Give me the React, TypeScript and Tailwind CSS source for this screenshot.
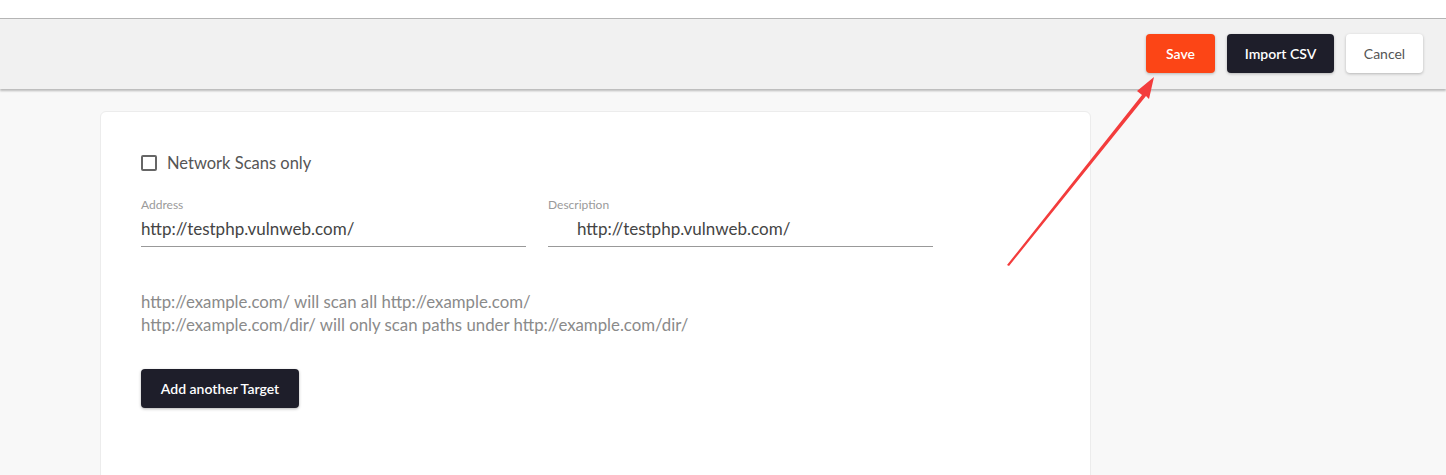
import React from "react";

export default function App() {
  return (
    <div
      className="relative w-[1446px] h-[475px] overflow-hidden bg-[#f8f8f8]"
      style={{ fontFamily: "Lato, 'Open Sans', sans-serif" }}
    >
      <div className="h-[18px] bg-white" />
      <div className="h-[71px] bg-[#f1f1f1] border-t border-[#b5b5b5] shadow-[0_2px_2px_rgba(0,0,0,0.25)] flex items-center justify-end gap-3 pr-[23px] pb-[2px] relative z-10">
        <button className="h-[39px] w-[69px] rounded bg-[#fc4516] text-white text-[14px] font-semibold shadow-[0_1px_3px_rgba(0,0,0,0.25)]">
          Save
        </button>
        <button className="h-[39px] w-[107px] rounded bg-[#1e1e2a] text-white text-[14px] font-semibold shadow-[0_1px_3px_rgba(0,0,0,0.25)]">
          Import CSV
        </button>
        <button className="h-[39px] w-[77px] rounded bg-white text-[#555] text-[14px] shadow-[0_1px_3px_rgba(0,0,0,0.25)]">
          Cancel
        </button>
      </div>
      <div className="pl-[100px] pt-[22px]">
        <div className="w-[991px] h-[400px] bg-white rounded-t-md border border-[#ececec] pl-[40px] pt-[39px]">
          <label className="flex items-center gap-[10px] text-[16.5px] text-[#555]">
            <span className="w-[16px] h-[16px] border-2 border-[#666] rounded-[2px] bg-white" />
            Network Scans only
          </label>
          <div className="flex gap-[22px] mt-[22px]">
            <div className="w-[385px] border-b border-[#999]">
              <div className="text-[12px] text-[#9a9a9a] leading-[14px]">Address</div>
              <div className="text-[17px] text-[#444] leading-[22px] mt-[6px] pb-[6px]">
                http://testphp.vulnweb.com/
              </div>
            </div>
            <div className="w-[385px] border-b border-[#999]">
              <div className="text-[12px] text-[#9a9a9a] leading-[14px]">Description</div>
              <div className="text-[17px] text-[#444] leading-[22px] mt-[6px] pb-[6px] pl-[29px]">
                http://testphp.vulnweb.com/
              </div>
            </div>
          </div>
          <div className="mt-[43px] text-[16.8px] text-[#8a8a8a] leading-[23px]">
            <div>http://example.com/ will scan all http://example.com/</div>
            <div>http://example.com/dir/ will only scan paths under http://example.com/dir/</div>
          </div>
          <button className="mt-[33px] h-[39px] w-[158px] rounded bg-[#1e1e2a] text-white text-[14px] font-semibold shadow-[0_1px_3px_rgba(0,0,0,0.3)]">
            Add another Target
          </button>
        </div>
      </div>
      <svg
        className="absolute left-0 top-0 z-20 pointer-events-none"
        width="1446"
        height="475"
      >
        <polygon
          points="1007,265 1142,95 1137,91 1154,77 1149,99 1146,96 1009,266"
          fill="#f33c3c"
        />
      </svg>
    </div>
  );
}
